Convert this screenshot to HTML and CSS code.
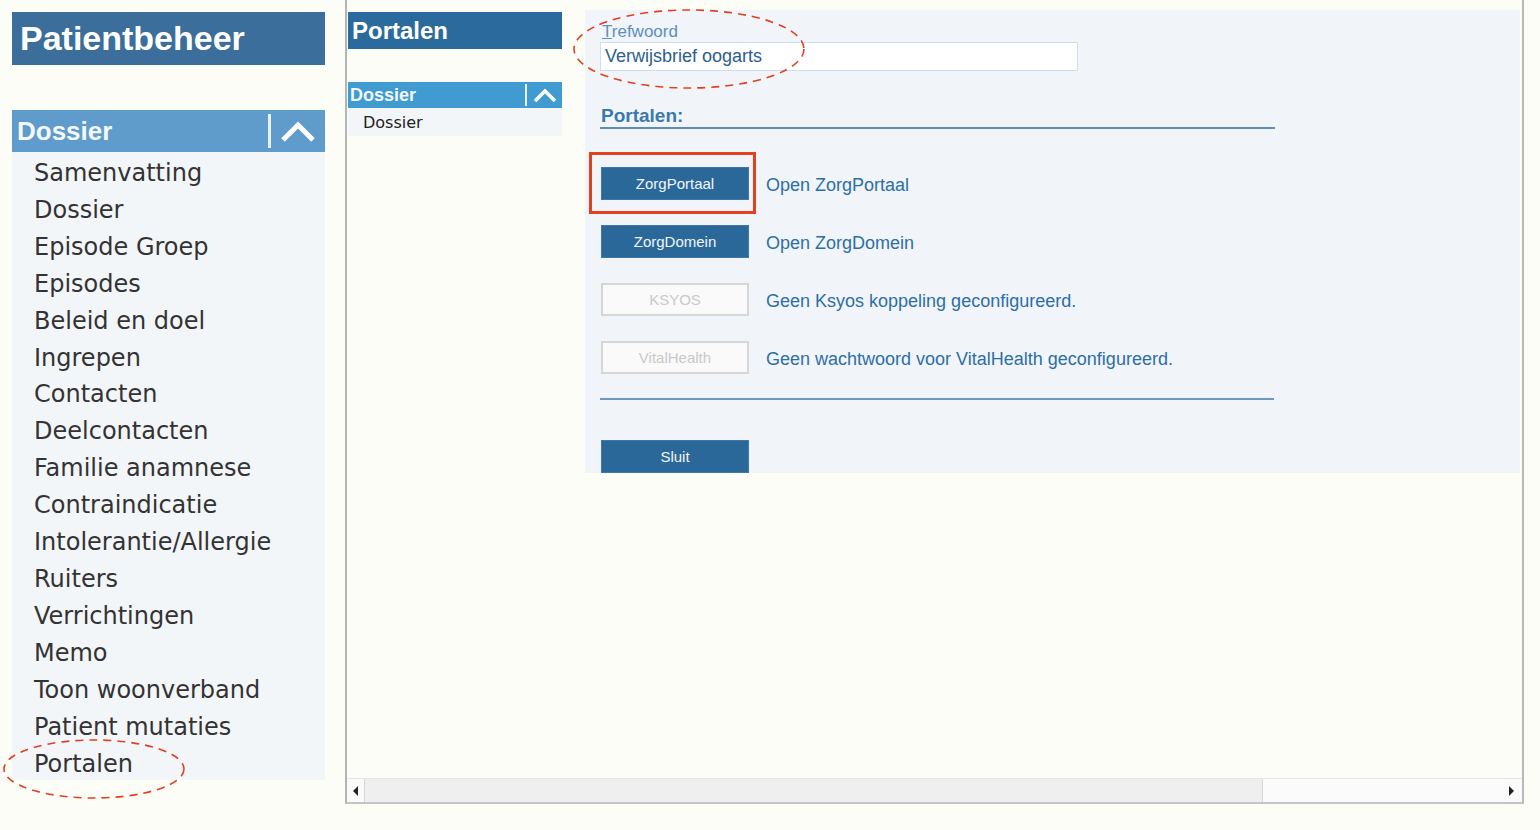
FILE: index.html
```html
<!DOCTYPE html>
<html lang="nl">
<head>
    <meta charset="UTF-8">
    <title>Patientbeheer - Portalen</title>
    <link rel="stylesheet" href="styles.css">
</head>
<body>
    <div class="page">
        <div class="sidebar">
            <div class="app-title">Patientbeheer</div>
            <div class="acc-bar big">
                <span class="acc-label">Dossier</span>
                <span class="acc-sep"></span>
                <svg class="chev" viewBox="0 0 36 24"><path d="M3 21 L18 6 L33 21" fill="none" stroke="#fff" stroke-width="5"/></svg>
            </div>
            <ul class="menu">
                <li>Samenvatting</li>
                <li>Dossier</li>
                <li>Episode Groep</li>
                <li>Episodes</li>
                <li>Beleid en doel</li>
                <li>Ingrepen</li>
                <li>Contacten</li>
                <li>Deelcontacten</li>
                <li>Familie anamnese</li>
                <li>Contraindicatie</li>
                <li>Intolerantie/Allergie</li>
                <li>Ruiters</li>
                <li>Verrichtingen</li>
                <li>Memo</li>
                <li>Toon woonverband</li>
                <li>Patient mutaties</li>
                <li class="marked">Portalen
                    <svg class="ring ring-menu" viewBox="0 0 184 62"><ellipse cx="92" cy="31" rx="90" ry="29" fill="none" stroke="#e0401e" stroke-width="1.6" stroke-dasharray="8 6"/></svg>
                </li>
            </ul>
        </div>

        <div class="window">
            <div class="window-body">
                <div class="nav-col">
                    <div class="nav-title">Portalen</div>
                    <div class="acc-bar small">
                        <span class="acc-label">Dossier</span>
                        <span class="acc-sep"></span>
                        <svg class="chev" viewBox="0 0 24 16"><path d="M2 14 L12 4 L22 14" fill="none" stroke="#fff" stroke-width="3.5"/></svg>
                    </div>
                    <div class="nav-item">Dossier</div>
                </div>

                <div class="portal-panel">
                    <div class="field">
                        <label class="field-label"><u>T</u>refwoord</label>
                        <div class="field-input">Verwijsbrief oogarts</div>
                        <svg class="ring ring-field" viewBox="0 0 234 82"><ellipse cx="117" cy="41" rx="115" ry="39" fill="none" stroke="#e0401e" stroke-width="1.6" stroke-dasharray="8 6"/></svg>
                    </div>

                    <div class="section-title">Portalen:</div>

                    <div class="portal-list">
                        <div class="portal-row">
                            <button class="btn">ZorgPortaal</button>
                            <span class="portal-text">Open ZorgPortaal</span>
                            <span class="highlight"></span>
                        </div>
                        <div class="portal-row">
                            <button class="btn">ZorgDomein</button>
                            <span class="portal-text">Open ZorgDomein</span>
                        </div>
                        <div class="portal-row">
                            <button class="btn off">KSYOS</button>
                            <span class="portal-text">Geen Ksyos koppeling geconfigureerd.</span>
                        </div>
                        <div class="portal-row">
                            <button class="btn off">VitalHealth</button>
                            <span class="portal-text">Geen wachtwoord voor VitalHealth geconfigureerd.</span>
                        </div>
                    </div>

                    <div class="divider"></div>

                    <button class="btn close">Sluit</button>
                </div>
            </div>

            <div class="hscroll">
                <span class="arrow left"></span>
                <span class="thumb"></span>
                <span class="rest"></span>
                <span class="arrow right"></span>
            </div>
        </div>
    </div>
</body>
</html>
```

FILE: styles.css
```css
body {
    margin: 0;
    background-color: #fdfdf8;
    font-family: "Liberation Sans", Arial, sans-serif;
}
.page {
    display: flex;
    padding-left: 12px;
    height: 830px;
}

/* left menu */
.sidebar {
    width: 313px;
    margin-top: 12px;
}
.app-title {
    height: 53px;
    background-color: #3b6e9b;
    color: #fff;
    font-weight: bold;
    font-size: 34px;
    line-height: 53px;
    padding-left: 8px;
    margin-bottom: 45px;
}
.acc-bar {
    display: flex;
    align-items: center;
    color: #f4f8fc;
    font-weight: bold;
}
.acc-bar.big {
    height: 42px;
    background-color: #5f9bcb;
    font-size: 26px;
    padding-left: 5px;
}
.acc-bar.big .acc-sep {
    width: 3px;
    height: 34px;
    background-color: #e8f1f8;
    margin-left: auto;
    margin-right: 9px;
}
.acc-bar.big .chev {
    width: 36px;
    height: 24px;
    margin-right: 9px;
}
.menu {
    list-style: none;
    margin: 0;
    padding: 3px 0 0 0;
    background-color: #f3f6f9;
    height: 625px;
}
.menu li {
    font-family: "DejaVu Sans", Verdana, sans-serif;
    font-size: 24px;
    line-height: 36.9px;
    color: #333333;
    padding-left: 22px;
}
.menu li.marked {
    position: relative;
}
.ring {
    position: absolute;
    pointer-events: none;
}
.ring-menu {
    width: 184px;
    height: 62px;
    left: -10px;
    top: -8px;
}

/* window */
.window {
    margin-left: 20px;
    width: 1175px;
    height: 802px;
    border-left: 2px solid #b4b4b4;
    border-right: 2px solid #b8b8b8;
    border-bottom: 2px solid #c4c4c4;
    display: flex;
    flex-direction: column;
}
.window-body {
    flex: 1;
    display: flex;
}
.nav-col {
    width: 214px;
    margin-left: 1px;
    padding-top: 12px;
}
.nav-title {
    height: 37px;
    background-color: #2b6a9c;
    color: #fff;
    font-weight: bold;
    font-size: 24px;
    line-height: 37px;
    padding-left: 4px;
    margin-bottom: 33px;
}
.acc-bar.small {
    height: 26px;
    background-color: #3f9bd0;
    font-size: 18px;
    padding-left: 2px;
}
.acc-bar.small .acc-sep {
    width: 2px;
    height: 22px;
    background-color: #e8f1f8;
    margin-left: auto;
    margin-right: 6px;
}
.acc-bar.small .chev {
    width: 24px;
    height: 16px;
    margin-right: 5px;
}
.nav-item {
    height: 28px;
    background-color: #f3f6f9;
    font-family: "DejaVu Sans", Verdana, sans-serif;
    font-size: 16px;
    line-height: 30px;
    color: #222;
    padding-left: 15px;
}

/* portal panel */
.portal-panel {
    flex: 1;
    margin-left: 23px;
    margin-right: 2px;
    margin-top: 10px;
    height: 463px;
    background-color: #f1f5f9;
    padding-left: 15px;
    box-sizing: border-box;
}
.field {
    position: relative;
    padding-top: 12px;
}
.field-label {
    display: block;
    color: #5d8fbe;
    font-size: 17px;
    line-height: 20px;
    padding-left: 2px;
}
.field-input {
    width: 472px;
    height: 27px;
    background-color: #fff;
    border: 1px solid #cfdeec;
    color: #2b5e8f;
    font-size: 18px;
    line-height: 27px;
    padding-left: 4px;
}
.ring-field {
    width: 234px;
    height: 82px;
    left: -28px;
    top: -2px;
}
.section-title {
    width: 674px;
    margin-top: 34px;
    padding-left: 1px;
    color: #3a78ae;
    font-weight: bold;
    font-size: 19px;
    line-height: 22px;
    border-bottom: 2px solid #5b8cba;
}
.portal-list {
    padding-top: 38px;
}
.portal-row {
    position: relative;
    display: flex;
    align-items: center;
    height: 33px;
    margin-bottom: 25px;
}
.btn {
    width: 148px;
    height: 33px;
    border: 1px solid #3f78a8;
    background-color: #2a6899;
    color: #f2f6fa;
    font-family: "Liberation Sans", Arial, sans-serif;
    font-size: 15px;
    padding: 0;
    margin-left: 1px;
}
.btn.off {
    background-color: #fafafa;
    border: 2px solid #d6d6d6;
    color: #c9c9c9;
}
.portal-text {
    margin-left: 17px;
    color: #2d6ea6;
    font-size: 18px;
    padding-top: 3px;
}
.highlight {
    position: absolute;
    left: -11px;
    top: -15px;
    width: 161px;
    height: 56px;
    border: 3px solid #e2401f;
}
.divider {
    width: 674px;
    height: 2px;
    background-color: #6d98c2;
    margin-top: -1px;
}
.btn.close {
    display: block;
    margin-top: 40px;
}

/* horizontal scrollbar */
.hscroll {
    display: flex;
    align-items: center;
    height: 23px;
    background-color: #fafafa;
    border-top: 1px solid #e6e6e6;
}
.arrow {
    width: 0;
    height: 0;
    border-top: 5px solid transparent;
    border-bottom: 5px solid transparent;
}
.arrow.left {
    border-right: 5px solid #222;
    margin: 0 6px 0 6px;
}
.arrow.right {
    border-left: 5px solid #222;
    margin: 0 8px 0 6px;
}
.thumb {
    width: 897px;
    height: 23px;
    background-color: #efefef;
    border-left: 1px solid #d8d8d8;
    border-right: 1px solid #d8d8d8;
}
.rest {
    flex: 1;
    height: 23px;
    background-color: #fbfbfb;
}
```
